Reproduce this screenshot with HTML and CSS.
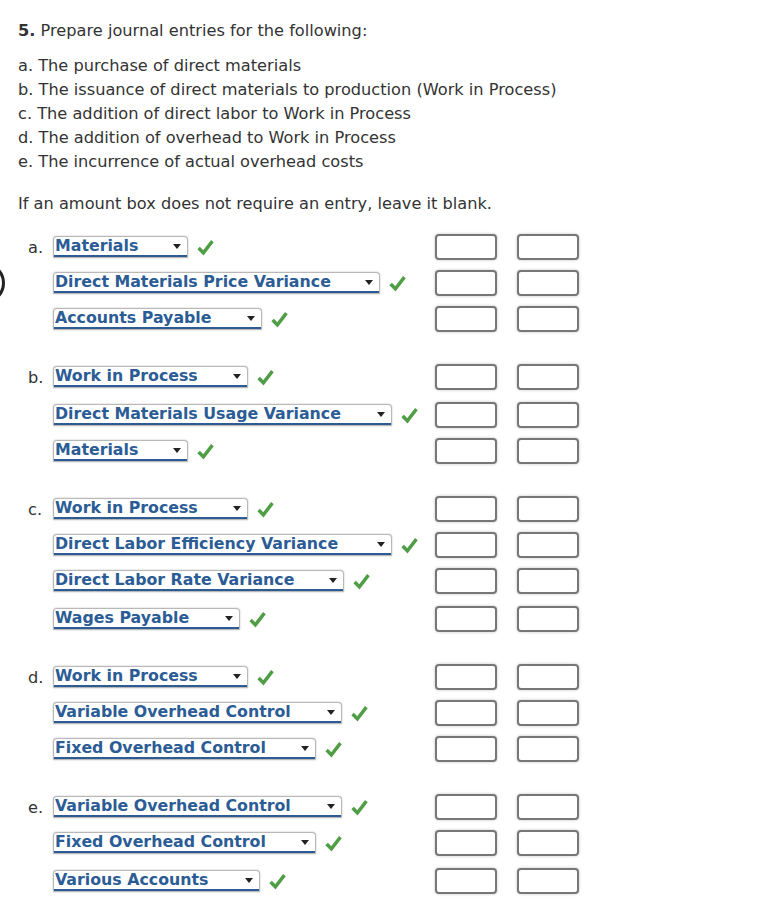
FILE: index.html
```html
<!DOCTYPE html>
<html>
<head>
<meta charset="utf-8">
<link rel="stylesheet" href="styles.css">
</head>
<body>
<div class="edge-arc"></div>
<div class="page">
  <p class="title"><b>5.</b> Prepare journal entries for the following:</p>
  <ul class="tasks">
    <li>a. The purchase of direct materials</li>
    <li>b. The issuance of direct materials to production (Work in Process)</li>
    <li>c. The addition of direct labor to Work in Process</li>
    <li>d. The addition of overhead to Work in Process</li>
    <li>e. The incurrence of actual overhead costs</li>
  </ul>
  <p class="note">If an amount box does not require an entry, leave it blank.</p>

  <div class="group">
    <div class="row"><span class="letter">a.</span><span class="acct"><span class="sel" style="width:133px">Materials</span><svg class="check" viewBox="0 0 16 16"><path d="M1.5 8.5 L6 13 L14.5 2"/></svg></span><span class="box"></span><span class="box"></span></div>
    <div class="row"><span class="letter"></span><span class="acct"><span class="sel" style="width:325px">Direct Materials Price Variance</span><svg class="check" viewBox="0 0 16 16"><path d="M1.5 8.5 L6 13 L14.5 2"/></svg></span><span class="box"></span><span class="box"></span></div>
    <div class="row"><span class="letter"></span><span class="acct"><span class="sel" style="width:207px">Accounts Payable</span><svg class="check" viewBox="0 0 16 16"><path d="M1.5 8.5 L6 13 L14.5 2"/></svg></span><span class="box"></span><span class="box"></span></div>
  </div>

  <div class="group">
    <div class="row"><span class="letter">b.</span><span class="acct"><span class="sel" style="width:193px">Work in Process</span><svg class="check" viewBox="0 0 16 16"><path d="M1.5 8.5 L6 13 L14.5 2"/></svg></span><span class="box"></span><span class="box"></span></div>
    <div class="row shift"><span class="letter"></span><span class="acct"><span class="sel" style="width:337px">Direct Materials Usage Variance</span><svg class="check" viewBox="0 0 16 16"><path d="M1.5 8.5 L6 13 L14.5 2"/></svg></span><span class="box"></span><span class="box"></span></div>
    <div class="row"><span class="letter"></span><span class="acct"><span class="sel" style="width:133px">Materials</span><svg class="check" viewBox="0 0 16 16"><path d="M1.5 8.5 L6 13 L14.5 2"/></svg></span><span class="box"></span><span class="box"></span></div>
  </div>

  <div class="group">
    <div class="row"><span class="letter">c.</span><span class="acct"><span class="sel" style="width:193px">Work in Process</span><svg class="check" viewBox="0 0 16 16"><path d="M1.5 8.5 L6 13 L14.5 2"/></svg></span><span class="box"></span><span class="box"></span></div>
    <div class="row"><span class="letter"></span><span class="acct"><span class="sel" style="width:337px">Direct Labor Efficiency Variance</span><svg class="check" viewBox="0 0 16 16"><path d="M1.5 8.5 L6 13 L14.5 2"/></svg></span><span class="box"></span><span class="box"></span></div>
    <div class="row"><span class="letter"></span><span class="acct"><span class="sel" style="width:289px">Direct Labor Rate Variance</span><svg class="check" viewBox="0 0 16 16"><path d="M1.5 8.5 L6 13 L14.5 2"/></svg></span><span class="box"></span><span class="box"></span></div>
    <div class="row shift"><span class="letter"></span><span class="acct"><span class="sel" style="width:185px">Wages Payable</span><svg class="check" viewBox="0 0 16 16"><path d="M1.5 8.5 L6 13 L14.5 2"/></svg></span><span class="box"></span><span class="box"></span></div>
  </div>

  <div class="group">
    <div class="row"><span class="letter">d.</span><span class="acct"><span class="sel" style="width:193px">Work in Process</span><svg class="check" viewBox="0 0 16 16"><path d="M1.5 8.5 L6 13 L14.5 2"/></svg></span><span class="box"></span><span class="box"></span></div>
    <div class="row"><span class="letter"></span><span class="acct"><span class="sel" style="width:287px">Variable Overhead Control</span><svg class="check" viewBox="0 0 16 16"><path d="M1.5 8.5 L6 13 L14.5 2"/></svg></span><span class="box"></span><span class="box"></span></div>
    <div class="row"><span class="letter"></span><span class="acct"><span class="sel" style="width:261px">Fixed Overhead Control</span><svg class="check" viewBox="0 0 16 16"><path d="M1.5 8.5 L6 13 L14.5 2"/></svg></span><span class="box"></span><span class="box"></span></div>
  </div>

  <div class="group">
    <div class="row"><span class="letter">e.</span><span class="acct"><span class="sel" style="width:287px">Variable Overhead Control</span><svg class="check" viewBox="0 0 16 16"><path d="M1.5 8.5 L6 13 L14.5 2"/></svg></span><span class="box"></span><span class="box"></span></div>
    <div class="row"><span class="letter"></span><span class="acct"><span class="sel" style="width:261px">Fixed Overhead Control</span><svg class="check" viewBox="0 0 16 16"><path d="M1.5 8.5 L6 13 L14.5 2"/></svg></span><span class="box"></span><span class="box"></span></div>
    <div class="row shift"><span class="letter"></span><span class="acct"><span class="sel" style="width:205px">Various Accounts</span><svg class="check" viewBox="0 0 16 16"><path d="M1.5 8.5 L6 13 L14.5 2"/></svg></span><span class="box"></span><span class="box"></span></div>
  </div>
</div>
</body>
</html>
```
FILE: styles.css
```css
html, body {
  margin: 0;
  padding: 0;
  background: #fff;
}
body {
  font-family: "DejaVu Sans", Verdana, sans-serif;
  font-size: 16.2px;
  color: #333;
  position: relative;
}
.page {
  padding: 19px 0 0 18px;
}
.title {
  margin: 0;
  line-height: 24px;
}
.tasks {
  list-style: none;
  margin: 11px 0 0 0;
  padding: 0;
}
.tasks li {
  line-height: 24px;
}
.note {
  margin: 18px 0 0 0;
  line-height: 24px;
}
.group {
  width: 561px;
  margin-top: 22px;
}
.group:first-of-type {
  margin-top: 13px;
}
.row {
  display: grid;
  grid-template-columns: 36px 1fr 62px 82px;
  height: 36px;
  align-items: center;
}
.row.shift {
  margin-top: 2px;
}
.row .box:last-child {
  margin-left: 20px;
}
.letter {
  padding-left: 10px;
  color: #333;
}
.acct {
  display: flex;
  align-items: center;
  gap: 10px;
}
.sel {
  position: relative;
  box-sizing: border-box;
  height: 20px;
  padding-left: 1px;
  font-weight: bold;
  font-size: 15.8px;
  color: #2b5c95;
  line-height: 18px;
  background: #fff;
  border-radius: 3px 3px 0 0;
  box-shadow: 0 0 1.5px 0.5px rgba(0,0,0,0.35);
  border-bottom: 2px solid #2b5c95;
  white-space: nowrap;
  overflow: hidden;
}
.sel::after {
  content: "";
  position: absolute;
  right: 6px;
  top: 7px;
  border-left: 4px solid transparent;
  border-right: 4px solid transparent;
  border-top: 5px solid #222;
}
.check {
  width: 17px;
  height: 17px;
  fill: none;
  stroke: #4f9e45;
  stroke-width: 3.2;
  stroke-linecap: butt;
  stroke-linejoin: miter;
}
.box {
  box-sizing: border-box;
  width: 62px;
  height: 26px;
  border: 2px solid #777;
  border-radius: 4px;
  background: #fff;
  box-shadow: 0 0 3px rgba(0,0,0,0.25);
}
.edge-arc {
  position: absolute;
  left: -37px;
  top: 262px;
  width: 36px;
  height: 36px;
  border: 3px solid #222;
  border-radius: 50%;
}
```
